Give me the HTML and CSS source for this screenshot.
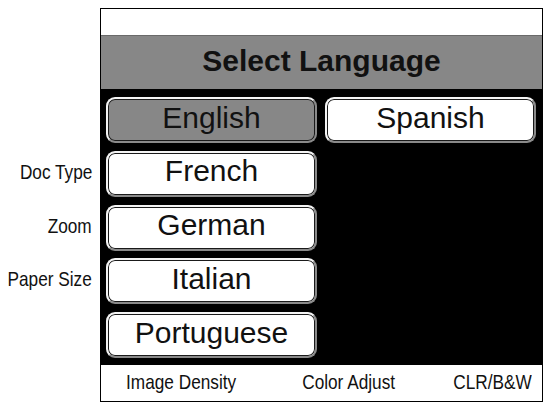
FILE: index.html
```html
<!DOCTYPE html>
<html>
<head>
<meta charset="utf-8">
<link rel="stylesheet" href="styles.css">
</head>
<body>
<div class="page">
  <div class="labels">
    <div class="label"></div>
    <div class="label"><span class="narrow">Doc Type</span></div>
    <div class="label"><span class="narrow">Zoom</span></div>
    <div class="label"><span class="narrow">Paper Size</span></div>
    <div class="label"></div>
  </div>
  <div class="screen">
    <div class="topbar"></div>
    <div class="header">Select Language</div>
    <div class="grid">
      <div class="btn selected">English</div>
      <div class="btn">Spanish</div>
      <div class="btn">French</div>
      <div class="empty"></div>
      <div class="btn">German</div>
      <div class="empty"></div>
      <div class="btn">Italian</div>
      <div class="empty"></div>
      <div class="btn">Portuguese</div>
      <div class="empty"></div>
    </div>
    <div class="footer">
      <div class="fkey fkey-left"><span class="narrow">Image Density</span></div>
      <div class="fkey fkey-mid"><span class="narrow">Color Adjust</span></div>
      <div class="fkey fkey-right"><span class="narrow">CLR/B&amp;W</span></div>
    </div>
  </div>
</div>
</body>
</html>
```
FILE: styles.css
```css
html, body {
  margin: 0;
  padding: 0;
  background: #fff;
}

.page {
  display: flex;
  align-items: flex-start;
  width: 549px;
  height: 406px;
}

.narrow {
  display: inline-block;
  white-space: nowrap;
  font-family: "Liberation Sans", Arial, sans-serif;
  font-size: 21px;
  transform: scaleX(0.82);
}

.labels {
  width: 100px;
  padding-top: 97px;
  display: flex;
  flex-direction: column;
  gap: 7.75px;
  box-sizing: border-box;
}

.label {
  height: 46px;
  display: flex;
  align-items: center;
  justify-content: flex-end;
  padding-right: 8px;
  padding-bottom: 4px;
  box-sizing: border-box;
  color: #111;
}

.label .narrow {
  transform-origin: right center;
}

.screen {
  margin-top: 8px;
  width: 443px;
  height: 394px;
  border: 1px solid #000;
  box-sizing: border-box;
  display: flex;
  flex-direction: column;
  background: #000;
}

.topbar {
  height: 26px;
  background: #fff;
}

.header {
  height: 55px;
  background: #878787;
  display: flex;
  align-items: center;
  justify-content: center;
  padding-bottom: 4px;
  box-sizing: border-box;
  font-family: "Liberation Sans", Arial, sans-serif;
  font-weight: bold;
  font-size: 30px;
  color: #111;
  border-top: 1px solid #6a6a6a;
  border-bottom: 1px solid #000;
}

.grid {
  flex: 1;
  background: #000;
  display: grid;
  grid-template-columns: 211px 211px;
  grid-auto-rows: 46px;
  column-gap: 8px;
  row-gap: 7.75px;
  padding: 7px 5px 0 5px;
  box-sizing: border-box;
}

.btn {
  box-sizing: border-box;
  border: 2px solid;
  border-color: #f4f4f4 #8a8a8a #8a8a8a #f4f4f4;
  border-radius: 9px;
  box-shadow: inset 0 0 0 1px #1a1a1a;
  background: #fff;
  display: flex;
  align-items: center;
  justify-content: center;
  padding-bottom: 5px;
  font-family: "Liberation Sans", Arial, sans-serif;
  font-size: 30px;
  color: #111;
}

.btn.selected {
  background: #878787;
}

.footer {
  height: 36px;
  background: #fff;
  display: grid;
  grid-template-columns: 161px 174px 1fr;
  align-items: center;
  padding: 0 10px 2px 0;
  box-sizing: border-box;
  color: #111;
}

.fkey {
  display: flex;
  justify-content: center;
}

.fkey-right {
  justify-content: flex-end;
}

.fkey-right .narrow {
  transform-origin: right center;
}
```
